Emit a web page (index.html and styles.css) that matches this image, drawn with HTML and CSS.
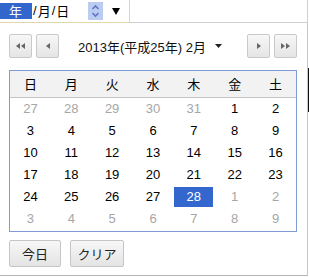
FILE: index.html
```html
<!DOCTYPE html>
<html lang="ja">
<head>
<meta charset="utf-8">
<link rel="stylesheet" href="styles.css">
</head>
<body>
<div class="top">
  <div class="field">
    <span class="seg sel">年</span><span class="sep">/</span><span class="seg">月</span><span class="sep">/</span><span class="seg">日</span>
    <span class="spin"><svg width="15" height="18" viewBox="0 0 15 18"><path d="M4.5 7 L7.5 4 L10.5 7" fill="none" stroke="#5b79c0" stroke-width="1.6"/><path d="M4.5 11 L7.5 14 L10.5 11" fill="none" stroke="#5b79c0" stroke-width="1.6"/></svg></span>
    <span class="drop"><svg width="8" height="7" viewBox="0 0 8 7"><path d="M0 0 H8 L4 7 Z" fill="#000"/></svg></span>
  </div>
  <div class="fill"></div>
</div>
<div class="main">
  <div class="popup">
    <div class="nav">
      <div class="btns">
        <button class="nb"><svg width="9" height="6" viewBox="0 0 9 6"><path d="M0 3 L4 0 V6 Z M5 3 L9 0 V6 Z" fill="#666"/></svg></button>
        <button class="nb"><svg width="4" height="6" viewBox="0 0 4 6"><path d="M0 3 L4 0 V6 Z" fill="#666"/></svg></button>
      </div>
      <div class="title">2013年(平成25年) 2月<svg class="caret" width="7" height="4" viewBox="0 0 7 4"><path d="M0 0 H7 L3.5 4 Z" fill="#222"/></svg></div>
      <div class="btns">
        <button class="nb"><svg width="4" height="6" viewBox="0 0 4 6"><path d="M4 3 L0 0 V6 Z" fill="#666"/></svg></button>
        <button class="nb"><svg width="9" height="6" viewBox="0 0 9 6"><path d="M4 3 L0 0 V6 Z M9 3 L5 0 V6 Z" fill="#666"/></svg></button>
      </div>
    </div>
    <div class="cal">
      <div class="hd">日</div><div class="hd">月</div><div class="hd">火</div><div class="hd">水</div><div class="hd">木</div><div class="hd">金</div><div class="hd">土</div>
      <div class="d o"><span>27</span></div><div class="d o"><span>28</span></div><div class="d o"><span>29</span></div><div class="d o"><span>30</span></div><div class="d o"><span>31</span></div><div class="d"><span>1</span></div><div class="d"><span>2</span></div>
      <div class="d"><span>3</span></div><div class="d"><span>4</span></div><div class="d"><span>5</span></div><div class="d"><span>6</span></div><div class="d"><span>7</span></div><div class="d"><span>8</span></div><div class="d"><span>9</span></div>
      <div class="d"><span>10</span></div><div class="d"><span>11</span></div><div class="d"><span>12</span></div><div class="d"><span>13</span></div><div class="d"><span>14</span></div><div class="d"><span>15</span></div><div class="d"><span>16</span></div>
      <div class="d"><span>17</span></div><div class="d"><span>18</span></div><div class="d"><span>19</span></div><div class="d"><span>20</span></div><div class="d"><span>21</span></div><div class="d"><span>22</span></div><div class="d"><span>23</span></div>
      <div class="d"><span>24</span></div><div class="d"><span>25</span></div><div class="d"><span>26</span></div><div class="d"><span>27</span></div><div class="d sel"><span>28</span></div><div class="d o"><span>1</span></div><div class="d o"><span>2</span></div>
      <div class="d o"><span>3</span></div><div class="d o"><span>4</span></div><div class="d o"><span>5</span></div><div class="d o"><span>6</span></div><div class="d o"><span>7</span></div><div class="d o"><span>8</span></div><div class="d o"><span>9</span></div>
    </div>
    <div class="foot">
      <button class="fb w52">今日</button>
      <button class="fb w54">クリア</button>
    </div>
  </div>
  <div class="side"><div class="bar"></div></div>
</div>
</body>
</html>
```
FILE: styles.css
```css
html, body {
  margin: 0;
  padding: 0;
  background: #fff;
}
body {
  width: 309px;
  height: 277px;
  overflow: hidden;
  font-family: "Liberation Sans", "Noto Sans CJK JP", sans-serif;
  font-size: 13px;
  color: #000;
}
.top {
  display: flex;
  height: 23px;
}
.field {
  box-sizing: border-box;
  width: 130px;
  height: 23px;
  border-right: 1px solid #e2d6ac;
  border-bottom: 1px solid #e2d6ac;
  display: flex;
  align-items: center;
  font-family: "Noto Sans CJK JP", sans-serif;
}
.seg {
  line-height: 16px;
  height: 16px;
}
.seg.sel {
  background: #3366cc;
  color: #fff;
  padding: 0 10px 0 9px;
}
.sep {
  font-family: "Liberation Sans", sans-serif;
  margin: 0 1px;
  line-height: 16px;
}
.spin {
  margin-left: 19px;
  width: 15px;
  height: 18px;
  background: #bccbf1;
  display: flex;
}
.drop {
  margin-left: 9px;
  display: flex;
}
.fill {
  box-sizing: border-box;
  width: 178px;
  height: 23px;
  border-bottom: 1px solid #cfcfcf;
  border-right: 1px solid #cfcfcf;
}
.main {
  display: flex;
}
.popup {
  box-sizing: border-box;
  width: 308px;
  border-right: 1px solid #c8c8c8;
  border-bottom: 1px solid #b4b4b4;
  padding: 11px 10px 8px 9px;
}
.side {
  width: 1px;
}
.bar {
  margin-top: 45px;
  height: 44px;
  background: #111;
}
.nav {
  display: flex;
  align-items: center;
  height: 24px;
}
.btns {
  display: flex;
  gap: 4px;
}
.nb {
  box-sizing: border-box;
  width: 23px;
  height: 24px;
  margin: 0;
  padding: 0;
  border: 1px solid #c9c9c9;
  border-radius: 2px;
  background: linear-gradient(#f7f7f7, #e5e5e5);
  display: flex;
  align-items: center;
  justify-content: center;
}
.title {
  flex: 1;
  display: flex;
  align-items: center;
  justify-content: center;
  font-family: "Liberation Sans", "Noto Sans CJK JP", sans-serif;
  font-size: 13px;
  color: #111;
  padding-right: 6px;
}
.caret {
  margin-left: 9px;
}
.cal {
  margin-top: 12px;
  box-sizing: border-box;
  width: 288px;
  border: 1px solid #7d9cd6;
  display: grid;
  grid-template-columns: repeat(7, 1fr);
  padding-bottom: 1px;
}
.hd {
  height: 26px;
  line-height: 26px;
  text-align: center;
  background: #f2f2f2;
  border-bottom: 1px solid #c4c4c4;
  font-family: "Noto Sans CJK JP", sans-serif;
  font-size: 13px;
}
.d {
  height: 22px;
  padding: 1px;
  box-sizing: border-box;
  text-align: center;
}
.d span {
  display: block;
  height: 20px;
  line-height: 20px;
}
.d.o {
  color: #a6a6a6;
}
.d.sel span {
  background: #3367cd;
  color: #fff;
}
.foot {
  margin-top: 8px;
  display: flex;
  gap: 9px;
}
.fb {
  box-sizing: border-box;
  height: 27px;
  margin: 0;
  padding: 0;
  border: 1px solid #c6c6c6;
  border-radius: 2px;
  background: linear-gradient(#f7f7f7, #e4e4e4);
  font-family: "Noto Sans CJK JP", sans-serif;
  font-size: 13px;
  color: #222;
}
.w52 { width: 52px; }
.w54 { width: 54px; }
```
